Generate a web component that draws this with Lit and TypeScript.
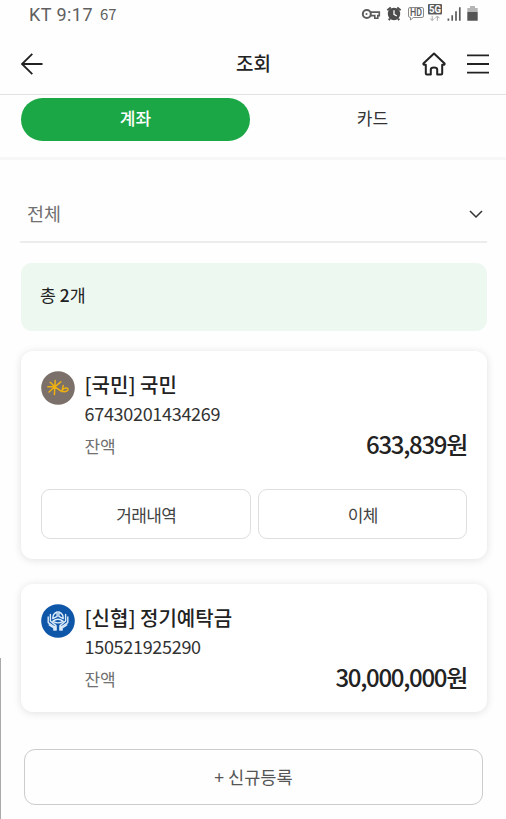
import { LitElement, html, css, svg, nothing } from "lit";
import { customElement, property, state } from "lit/decorators.js";
import { classMap } from "lit/directives/class-map.js";

interface Account {
  logo: "kb" | "cu";
  name: string;
  number: string;
  amount: string;
  actions: string[];
}

const kbLogo = svg`
  <circle cx="17" cy="17" r="16.8" fill="#7c716a"/>
  <g fill="none" stroke="#eeb111" stroke-width="1.5" stroke-linecap="round" stroke-linejoin="round">
    <path d="M6.8 15.8H14M9.2 11.2 13.8 15.8 20.8 20.6M8 21 13.8 15.8 19.8 10.8M14.2 9.6 13.4 23.6"/>
    <path d="M22.2 14.6 21 20.2Q24.6 21.4 26.8 19.2Q27.6 16.8 24.9 17Q22.8 17.2 21.4 18.8"/>
  </g>`;

const cuLogo = svg`
  <circle cx="17" cy="17" r="16.8" fill="#0e56a8"/>
  <g fill="none" stroke="#dcebfa" stroke-width="1.4" stroke-linecap="round" stroke-linejoin="round">
    <path d="M16.1 7.8Q11.4 10 11.8 14.6L16.1 12.4ZM17.9 7.8Q22.6 10 22.2 14.6L17.9 12.4Z"/>
    <path d="M11.8 17.4Q17 13 22.2 17.4Q17 20.4 11.8 17.4Z"/>
    <path d="M9.4 10.4V17L15 21.6V26M7.2 13V18.6L13 22.6V26M24.6 10.4V17L19 21.6V26M26.8 13V18.6L21 22.6V26"/>
    <path d="M8.2 20.8 12 23.4M25.8 20.8 22 23.4"/>
  </g>
  <path d="M12.6 21.6 15.4 22.4V26.4H12.6ZM21.4 21.6 18.6 22.4V26.4H21.4Z" fill="#dcebfa"/>`;

@customElement("account-card")
export class AccountCard extends LitElement {
  @property({ attribute: false }) account!: Account;

  static styles = css`
    :host {
      display: block;
      box-sizing: border-box;
      padding: 19px 20px 20px;
      background: #fff;
      border-radius: 12px;
      box-shadow: 0 1px 9px rgba(0, 0, 0, 0.12);
    }
    .info { display: grid; grid-template-columns: 34px 1fr; column-gap: 9.5px; height: 89px; }
    .logo { width: 34px; height: 34px; margin-top: 1px; margin-left: -0.5px; }
    .name { font-size: 20px; font-weight: 500; line-height: 29px; color: #222; white-space: nowrap; }
    .number { font-size: 18px; line-height: 28px; letter-spacing: -0.3px; color: #333; }
    .balance { display: flex; justify-content: space-between; align-items: center; height: 34px; }
    .label { font-size: 17px; color: #707070; letter-spacing: -0.1px; padding-top: 3px; line-height: 24px; }
    .amount { font-size: 24px; font-weight: 500; line-height: 34px; letter-spacing: -1.3px; color: #222; }
    .actions { display: grid; grid-template-columns: 1fr 1fr; gap: 7px; margin-top: 30px; }
    .action {
      height: 50px; padding: 0 0 0 1px; border: 1px solid #dedede; border-radius: 9px;
      background: #fff; color: #444; font: inherit; font-size: 17px; letter-spacing: -0.6px;
    }
  `;

  render() {
    const a = this.account;
    return html`
      <div class="info">
        <svg class="logo" viewBox="0 0 34 34">${a.logo === "kb" ? kbLogo : cuLogo}</svg>
        <div>
          <div class="name">${a.name}</div>
          <div class="number">${a.number}</div>
          <div class="balance">
            <span class="label">잔액</span><span class="amount">${a.amount}</span>
          </div>
        </div>
      </div>
      ${a.actions.length
        ? html`<div class="actions">${a.actions.map((t) => html`<button class="action">${t}</button>`)}</div>`
        : nothing}
    `;
  }
}

@customElement("app-root")
export class AppRoot extends LitElement {
  @state() private tab = 0;

  private accounts: Account[] = [
    { logo: "kb", name: "[국민] 국민", number: "67430201434269", amount: "633,839원", actions: ["거래내역", "이체"] },
    { logo: "cu", name: "[신협] 정기예탁금", number: "150521925290", amount: "30,000,000원", actions: [] },
  ];

  static styles = css`
    :host {
      display: block; position: relative; box-sizing: border-box; height: 819px; overflow: hidden;
      background: #fefefe; color: #222; font-family: "Noto Sans CJK KR", sans-serif;
    }
    .status {
      display: flex; justify-content: space-between; height: 30px; padding: 0 28px 0 29px;
      font-family: Roboto, sans-serif; color: #606060;
    }
    .clock { display: flex; align-items: baseline; font-size: 18px; line-height: 29px; letter-spacing: 0.45px; }
    .temp { font-size: 15px; margin-left: 7px; font-family: "Noto Sans CJK KR", sans-serif; line-height: 20px; letter-spacing: -0.2px; position: relative; top: -1px; }
    .signals { width: 118px; height: 26px; }
    .header {
      display: grid; grid-template-columns: 1fr auto 1fr; align-items: center;
      height: 64px; padding: 0 15px 0 20px; border-bottom: 1px solid #e3e3e3;
    }
    .back { width: 24px; height: 24px; margin-top: 4px; }
    .title { font-size: 19px; font-weight: 500; line-height: 28px; margin: 1px 4px 0 0; }
    .tools { display: flex; justify-content: flex-end; align-items: center; gap: 19px; margin-top: 4px; }
    .tool { width: 26px; height: 26px; }
    .tabs { display: flex; height: 43px; padding: 3px 19px 16px 21px; border-bottom: 3px solid #f7f7f7; }
    .tab {
      flex: none; width: 229px; height: 43px; padding: 0 0 4px; border: 0; border-radius: 22px;
      background: none; color: #333; font: inherit; font-size: 17px; margin-right: 8px;
    }
    .tab.on { background: #1ca747; color: #fff; font-weight: 500; }
    .select {
      display: flex; align-items: center; justify-content: space-between;
      height: 54px; margin: 27px 19px 0 20px; padding: 0 3px 0 7px;
      border-bottom: 2px solid #ececec; font-size: 18.5px; line-height: 26px; color: #707070;
    }
    .option { padding-bottom: 3px; }
    .chevron { width: 16px; height: 16px; }
    .content { display: flex; flex-direction: column; padding: 20px 19px 0 21px; }
    .total {
      box-sizing: border-box; height: 68px; line-height: 63px; padding-left: 19px; border-radius: 11px;
      background: #edf8f0; font-size: 17.3px; margin-bottom: 20px;
    }
    .count { font-weight: 500; }
    .list { display: grid; gap: 25px; }
    .add {
      height: 56px; margin: 37px 4px 0 3px; padding: 0 0 1px; border: 1px solid #ccc; border-radius: 11px;
      background: #fefefe; color: #555; font: inherit; font-size: 17.6px;
    }
    .edge { position: absolute; left: 0; top: 658px; width: 1px; bottom: 0; background: #aaa; }
  `;

  render() {
    return html`
      <div class="status">
        <div class="clock">KT 9:17<span class="temp">67</span></div>
        <svg class="signals" viewBox="360 0 118 26" fill="none" stroke="#5c5c5c">
          <circle cx="366.8" cy="14" r="4" stroke-width="2"/>
          <circle cx="366.5" cy="14" r="1" fill="#5c5c5c" stroke="none"/>
          <path d="M370.8 12.1H379.3V15.6H377.8V18.2H374.8V15.6H370.8" stroke-width="1.6"/>
          <circle cx="394" cy="14" r="6.2" fill="#4c4c4c" stroke="none"/>
          <path d="M387.4 10.2 390.8 7.5M400.6 10.2 397.2 7.5M390 18.6 388.7 20M398 18.6 399.3 20" stroke="#4c4c4c" stroke-width="2"/>
          <path d="M394 10.2V14.3L396.8 16" stroke="#fff" stroke-width="1.3"/>
          <path d="M410 7.5H422Q423.5 7.5 423.5 9V16Q423.5 17.5 422 17.5H413.2L410.5 20V17.5Q408.5 17.5 408.5 16V9Q408.5 7.5 410 7.5Z" stroke="#8a8a8a"/>
          <text x="410" y="16.2" font-size="10" font-weight="500" textLength="12" lengthAdjust="spacingAndGlyphs" fill="#5c5c5c" stroke="none">HD</text>
          <rect x="428" y="4" width="14" height="10.5" rx="1" fill="#5c5c5c" stroke="none"/>
          <text x="429" y="12.8" font-size="10.4" font-weight="700" textLength="12" lengthAdjust="spacingAndGlyphs" fill="#fff" stroke="none">5G</text>
          <path d="M432.2 15.8V20.5M430.2 18.5 432.2 20.6 434.2 18.5M437.4 20.8V16.2M435.4 18.2 437.4 16 439.4 18.2" stroke="#aaa"/>
          <path d="M448.4 18.4V20.8M452.2 15.2V20.8M456 11.2V20.8M459.8 7.2V20.8" stroke-width="1.7"/>
          <path d="M467.3 8H470V6H475V8H477.7V12H467.3Z" fill="#b5b5b5" stroke="none"/>
          <rect x="467.3" y="12" width="10.4" height="8.8" rx=".5" fill="#555" stroke="none"/>
        </svg>
      </div>
      <div class="header">
        <svg class="back" viewBox="0 0 24 24" fill="none" stroke="#222" stroke-width="1.8">
          <path d="M22.5 12H2.2M12.3 1.8 2 12 12.3 22.2"/>
        </svg>
        <span class="title">조회</span>
        <div class="tools">
          <svg class="tool" viewBox="0 0 26 26" fill="none" stroke="#222" stroke-width="2" stroke-linejoin="round" stroke-linecap="round">
            <path d="M14 2.6 3.4 12.6Q3.2 13.8 4.6 13.8H5.8V22.4Q5.8 23.4 6.8 23.4H10.8V18.6Q10.8 16.4 14 16.4Q17.2 16.4 17.2 18.6V23.4H21.2Q22.2 23.4 22.2 22.4V13.8H23.4Q24.8 13.8 24.6 12.6Z"/>
          </svg>
          <svg class="tool" viewBox="0 0 26 26" stroke="#222" stroke-width="1.8">
            <path d="M2 4.3H24M2 13H24M2 21.7H24"/>
          </svg>
        </div>
      </div>
      <div class="tabs">
        ${["계좌", "카드"].map(
          (t, i) => html`<button class=${classMap({ tab: true, on: this.tab === i })} @click=${() => (this.tab = i)}>${t}</button>`
        )}
      </div>
      <div class="select">
        <span class="option">전체</span>
        <svg class="chevron" viewBox="0 0 16 16" fill="none" stroke="#333" stroke-width="1.5"><path d="M2 5 8 11 14 5"/></svg>
      </div>
      <div class="content">
        <div class="total">총 <span class="count">2</span>개</div>
        <div class="list">${this.accounts.map((a) => html`<account-card .account=${a}></account-card>`)}</div>
        <button class="add">+ 신규등록</button>
      </div>
      <div class="edge"></div>
    `;
  }
}
